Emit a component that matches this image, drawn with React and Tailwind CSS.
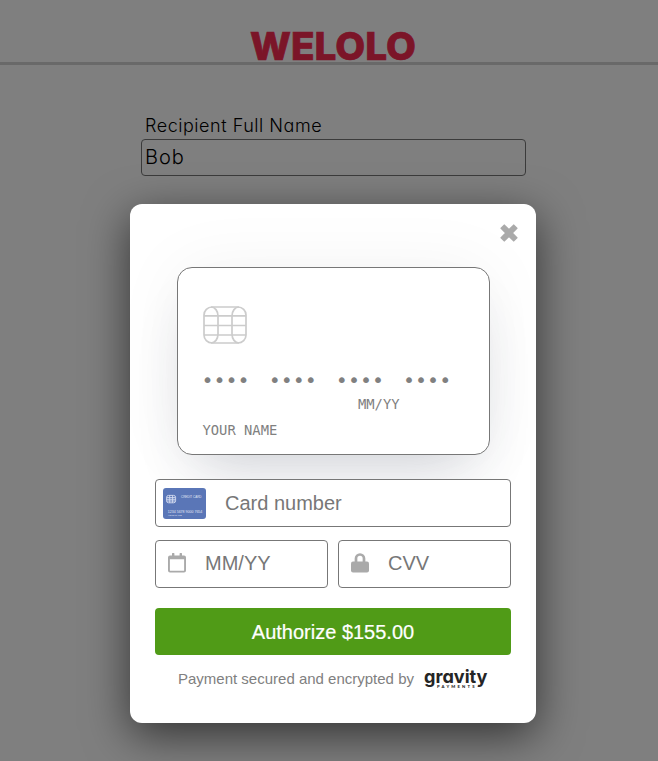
import React from "react";

function Chip({ className }) {
  return (
    <svg className={className} viewBox="0 0 44 38" fill="none" stroke="currentColor" strokeWidth="1.7">
      <rect x="1" y="1" width="42" height="36" rx="8" />
      <path d="M1 9.8H43M1 19.5H43M1 29H43" />
      <path d="M8 1C12 1 15 5 15 10V28C15 33 12 37 8 37M36 1C32 1 29 5 29 10V28C29 33 32 37 36 37" />
    </svg>
  );
}

function CreditCardIcon() {
  return (
    <svg className="h-[31px] w-[43px] shrink-0" viewBox="0 0 43 31">
      <rect width="43" height="31" rx="3" fill="#5a76b7" />
      <g fill="none" stroke="#d5dcf0" strokeWidth="0.9">
        <rect x="3.6" y="7.4" width="9" height="7.4" rx="2" />
        <path d="M3.6 9.6h9M3.6 11.3h9M3.6 13h9M6.7 7.4v7.4M9.6 7.4v7.4" />
      </g>
      <g fill="#e3e8f5" fontFamily="'Liberation Sans', Arial, sans-serif">
        <text x="18" y="9.8" fontSize="3.6" textLength="20.5" lengthAdjust="spacingAndGlyphs">CREDIT CARD</text>
        <text x="4.8" y="24.9" fontSize="3.8" textLength="34.5" lengthAdjust="spacingAndGlyphs">1234 5678 9000 7654</text>
        <text x="4.8" y="27.9" fontSize="2.4" textLength="14" lengthAdjust="spacingAndGlyphs">YOUR NAME</text>
      </g>
    </svg>
  );
}

function CloseIcon() {
  return (
    <svg className="size-[18px]" viewBox="0 0 18 18" fill="#aaa" stroke="#aaa" strokeWidth="1.6" strokeLinejoin="round">
      <path d="M4.300 1.200 9 5.900 13.700 1.200 16.800 4.300 12.100 9 16.800 13.700 13.700 16.800 9 12.100 4.300 16.800 1.200 13.700 5.900 9 1.200 4.300Z" />
    </svg>
  );
}

function CalendarIcon() {
  return (
    <svg className="h-5 w-[18px] shrink-0" viewBox="0 0 18 20" fill="#aaa">
      <path fillRule="evenodd" d="M2 2.500h2V.6Q4 0 4.600 0h1.200q.6 0 .6.6v1.900h5.200V.6q0-.6.6-.6h1.200q.6 0 .6.6v1.900h2q2 0 2 2V17.500q0 2-2 2H2q-2 0-2-2V4.500q0-2 2-2ZM1.900 6.200v11q0 .6.6.6h13q.6 0 .6-.6v-11Z" />
    </svg>
  );
}

function LockIcon() {
  return (
    <svg className="h-5 w-[18px] shrink-0" viewBox="0 0 18 20">
      <path d="M5 10V5.500a4 4 0 0 1 8 0V10" fill="none" stroke="#aaa" strokeWidth="2.700" />
      <rect y="8.500" width="18" height="11" rx="2" fill="#aaa" />
    </svg>
  );
}

function GravityLogo() {
  return (
    <svg className="h-6 w-[66px] shrink-0 overflow-visible" viewBox="0 0 66 24" fill="#252525">
      <text x="1" y="16" className="[font-feature-settings:'cv11']" fontFamily="Inter, sans-serif" fontWeight="700" fontSize="18.500" textLength="63.500" lengthAdjust="spacingAndGlyphs">gravity</text>
      <text x="14" y="21.200" fontFamily="Lato, sans-serif" fontWeight="900" fontSize="4.200" textLength="37.500">PAYMENTS</text>
    </svg>
  );
}

function Field({ icon, placeholder, className }) {
  return (
    <div className={`flex h-12 items-center rounded border border-[#777] bg-white text-xl leading-6 text-[#777] ${className}`}>
      {icon}
      <span>{placeholder}</span>
    </div>
  );
}

function PreviewCard() {
  return (
    <div className="mx-auto h-[188px] w-[313px] rounded-[15px] border border-[#777] bg-white pl-[25px] pt-[38px] font-['DejaVu_Sans_Mono',monospace] text-[#808080] shadow-[0_0_70px_rgba(0,0,0,0.05),0_30px_60px_-20px_rgba(40,50,80,0.2)]">
      <Chip className="h-[38px] w-11 text-[#ccc]" />
      <div className="-ml-px mt-6 flex gap-[19px] text-xl leading-6">
        {[0, 1, 2, 3].map((n) => (
          <span key={n}>••••</span>
        ))}
      </div>
      <div className="ml-[155.500px] mt-1 text-[13.800px] leading-4">MM/YY</div>
      <div className="mt-[10px] text-[13.800px] leading-4">YOUR NAME</div>
    </div>
  );
}

function PaymentModal() {
  return (
    <section className="mt-[204px] h-[519px] w-[406px] rounded-xl bg-white px-[25px] pt-5 shadow-[0_12px_45px_rgba(0,0,0,0.6)]">
      <div className="-mr-[7px] flex h-[43px] justify-end">
        <button className="h-[18px]" aria-label="Close"><CloseIcon /></button>
      </div>
      <PreviewCard />
      <div className="relative mt-6">
        <Field icon={<CreditCardIcon />} placeholder="Card number" className="gap-[19px] pl-[7px]" />
        <div className="mt-[13px] grid grid-cols-2 gap-[10px]">
          <Field icon={<CalendarIcon />} placeholder="MM/YY" className="gap-[19px] pb-0.5 pl-3" />
          <Field icon={<LockIcon />} placeholder="CVV" className="gap-[19px] pb-0.5 pl-3" />
        </div>
      </div>
      <button className="mt-5 block h-[47px] w-full rounded bg-[#509b17] text-xl text-white [-webkit-text-stroke:0.2px_white]">Authorize $155.00</button>
      <div className="mt-3 flex items-center gap-[9px] pl-[23px] text-[15px] leading-6 text-[#808080]">
        <span>Payment secured and encrypted by</span>
        <GravityLogo />
      </div>
    </section>
  );
}

export default function App() {
  return (
    <div className="relative h-[761px] w-[658px] overflow-hidden bg-white font-['Liberation_Sans',Arial,sans-serif]">
      <header className="flex h-[65px] justify-center border-b-[3px] border-[#d3d3d3] pl-2 pt-[26px]">
        <svg className="h-9 w-[168px] overflow-visible" viewBox="0 0 168 36">
          <text x="1" y="34" fill="#f62a51" stroke="#f62a51" strokeWidth="0.7" fontFamily="Inter, sans-serif" fontWeight="800" fontSize="38.500" textLength="166" lengthAdjust="spacingAndGlyphs">WELOLO</text>
        </svg>
      </header>
      <main className="ml-[141px] w-[385px] pt-[46px] font-['Inter',sans-serif] font-light text-black [font-feature-settings:'cv11']">
        <div className="h-7 pl-1 text-[18px] leading-[30px] tracking-[0.53px]">Recipient Full Name</div>
        <div className="h-[37px] rounded-sm border border-[#767676] pl-[3px] text-xl leading-[35px] tracking-[1px]">Bob</div>
      </main>
      <div className="absolute inset-0 flex items-start bg-black/50 pl-[130px]">
        <PaymentModal />
      </div>
    </div>
  );
}
